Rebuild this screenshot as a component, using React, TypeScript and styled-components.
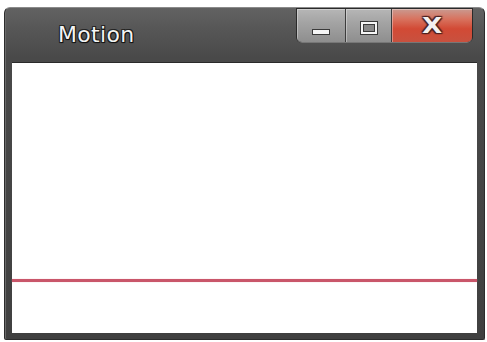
import React from "react";
import styled, { createGlobalStyle } from "styled-components";

const Global = createGlobalStyle`
  html, body { margin: 0; padding: 0; background: #ffffff; }
  body { width: 487px; height: 342px; overflow: hidden; font-family: "DejaVu Sans", sans-serif; }
`;

const Page = styled.div`
  padding: 7px 2px 2px 4px;
`;

const Window = styled.div`
  width: 481px;
  height: 333px;
  box-sizing: border-box;
  display: flex;
  flex-direction: column;
  background: linear-gradient(#626262 0px, #575757 20px, #494949 50px, #404040 100%);
  border: 1px solid #2c2c2c;
  border-top-color: #8a8a8a;
  border-radius: 6px 6px 2px 2px;
  box-shadow: inset 1px 0 0 #6a6a6a;
  padding: 0 7px 6px 7px;
`;

const TitleBar = styled.div`
  height: 54px;
  flex: none;
  display: flex;
  align-items: flex-start;
  justify-content: space-between;
`;

const Title = styled.div`
  margin: 14px 0 0 46px;
  font-size: 22px;
  letter-spacing: 0.3px;
  color: #f4f4f4;
  text-shadow: 0 0 1px #000, 1px 1px 0 #151515, -1px -1px 0 #2a2a2a, 1px -1px 0 #222, -1px 1px 0 #222, 0 1px 1px #111;
`;

const Buttons = styled.div`
  display: flex;
  margin-right: 5px;
  margin-top: 1px;
  border-radius: 0 0 5px 5px;
  box-shadow: 0 1px 0 #777, 0 0 0 1px #2a2a2a;
  overflow: hidden;
`;

const CtrlButton = styled.div<{ $close?: boolean; $w: number }>`
  width: ${(p) => p.$w}px;
  height: 33px;
  box-sizing: border-box;
  display: flex;
  align-items: center;
  justify-content: center;
  padding-top: 4px;
  border-right: 1px solid #3c3c3c;
  background: ${(p) =>
    p.$close
      ? "linear-gradient(#c99a90 0%, #d8735f 30%, #d24a35 60%, #c8513f 100%)"
      : "linear-gradient(#b6b6b6 0%, #a4a4a4 40%, #8e8e8e 100%)"};
  box-shadow: inset 1px 1px 0 rgba(255,255,255,0.35);
  &:last-child { border-right: none; }
`;

const MinGlyph = styled.div`
  width: 16px;
  height: 4px;
  background: #f6f6f6;
  border: 1px solid #3a3a3a;
  margin-top: 8px;
`;

const MaxGlyph = styled.div`
  width: 12px;
  height: 8px;
  border: 2px solid #f6f6f6;
  box-shadow: 0 0 0 1px #3a3a3a, inset 0 0 0 1px #3a3a3a;
  background: #8a8a8a;
`;

const CloseGlyph = styled.div`
  font-size: 21px;
  font-weight: bold;
  color: #f4f0f0;
  line-height: 1;
  margin-top: -2px;
  transform: scaleX(1.25);
  text-shadow: 0 0 1px #4a2020, 1px 1px 1px #4a2020, -1px -1px 1px #4a2020, 1px -1px 1px #4a2020, -1px 1px 1px #4a2020;
`;

const Content = styled.div`
  flex: 1;
  background: #ffffff;
  border-top: 1px solid #2a2a2a;
  display: flex;
  flex-direction: column;
`;

const Upper = styled.div`
  height: 216px;
  flex: none;
`;

const RedLine = styled.div`
  height: 3px;
  background: #c9566a;
  box-shadow: 0 0 1px #e39aa6;
`;

export default function App() {
  return (
    <>
      <Global />
      <Page>
        <Window>
          <TitleBar>
            <Title>Motion</Title>
            <Buttons>
              <CtrlButton $w={49}>
                <MinGlyph />
              </CtrlButton>
              <CtrlButton $w={46}>
                <MaxGlyph />
              </CtrlButton>
              <CtrlButton $close $w={80}>
                <CloseGlyph>X</CloseGlyph>
              </CtrlButton>
            </Buttons>
          </TitleBar>
          <Content>
            <Upper />
            <RedLine />
          </Content>
        </Window>
      </Page>
    </>
  );
}
